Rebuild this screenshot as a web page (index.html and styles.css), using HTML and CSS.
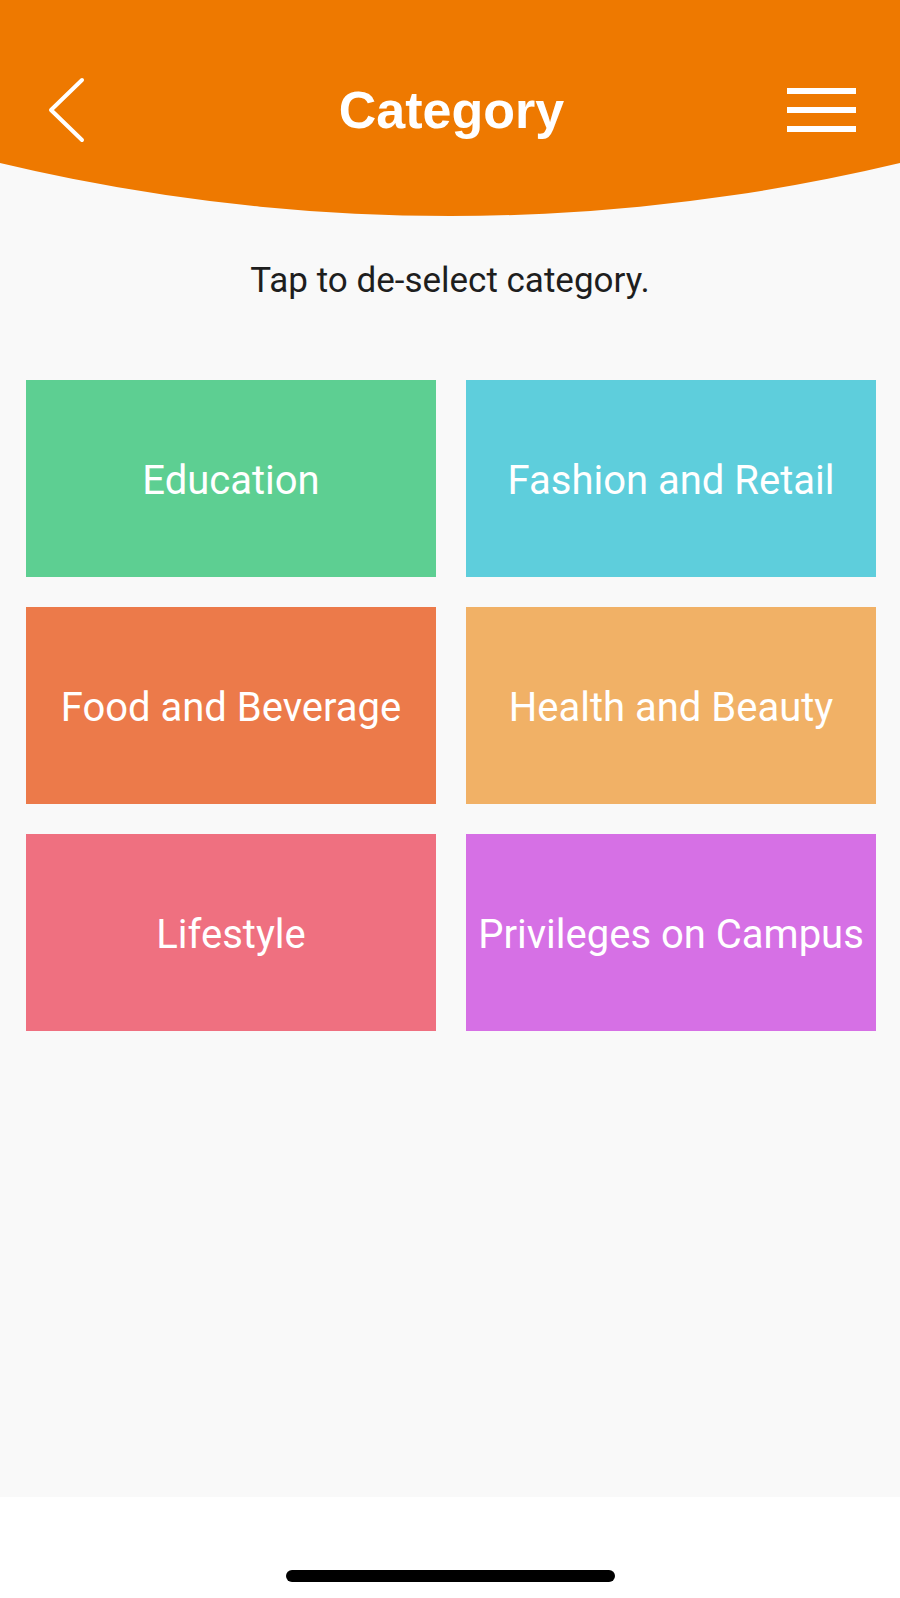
FILE: index.html
```html
<!DOCTYPE html>
<html lang="en">
<head>
<meta charset="utf-8">
<title>Category</title>
<link rel="stylesheet" href="styles.css">
</head>
<body>
<div class="screen">
  <header class="top-bar">
    <div class="nav">
      <svg class="back" viewBox="0 0 40 70" width="40" height="70" aria-hidden="true">
        <path d="M35 5 L4 35 L35 65" fill="none" stroke="#fff" stroke-width="4" stroke-linecap="round" stroke-linejoin="round"/>
      </svg>
      <h1 class="title">Category</h1>
      <div class="menu" aria-hidden="true">
        <span class="bar"></span>
        <span class="bar"></span>
        <span class="bar"></span>
      </div>
    </div>
  </header>

  <main class="content">
    <p class="hint">Tap to de-select category.</p>
    <div class="grid">
      <div class="tile green">Education</div>
      <div class="tile blue">Fashion and Retail</div>
      <div class="tile orange">Food and Beverage</div>
      <div class="tile peach">Health and Beauty</div>
      <div class="tile pink">Lifestyle</div>
      <div class="tile purple">Privileges on Campus</div>
    </div>
  </main>

  <footer class="home-area">
    <span class="home-indicator"></span>
  </footer>
</div>
</body>
</html>
```

FILE: styles.css
```css
* { box-sizing: border-box; }

html, body {
  margin: 0;
  padding: 0;
}

body {
  background: #ffffff;
  font-family: Roboto, "Liberation Sans", sans-serif;
}

.screen {
  width: 900px;
  height: 1598px;
  display: flex;
  flex-direction: column;
  background: #f9f9f9;
}

.top-bar {
  height: 216px;
  background: #ee7900;
  clip-path: circle(1937px at 50% -1721px);
  padding-top: 70px;
  flex: none;
}

.nav {
  height: 80px;
  display: grid;
  grid-template-columns: 1fr auto 1fr;
  align-items: center;
  padding: 0 44px 0 47px;
}

.back {
  display: block;
  justify-self: start;
}

.title {
  margin: 0;
  font-family: "Liberation Sans", Arial, sans-serif;
  font-weight: bold;
  font-size: 52px;
  line-height: 1;
  color: #ffffff;
  text-align: center;
}

.menu {
  justify-self: end;
  width: 69px;
  display: flex;
  flex-direction: column;
  gap: 13px;
}

.bar {
  display: block;
  height: 6px;
  background: #ffffff;
}

.content {
  flex: 1;
  padding-top: 45px;
}

.hint {
  margin: 0;
  font-size: 35px;
  line-height: 40px;
  color: #1e1e1e;
  text-align: center;
}

.grid {
  margin-top: 79px;
  padding: 0 24px 0 26px;
  display: grid;
  grid-template-columns: 1fr 1fr;
  grid-auto-rows: 197px;
  gap: 30px;
}

.tile {
  display: flex;
  align-items: center;
  justify-content: center;
  color: #ffffff;
  font-size: 40px;
  padding-top: 3px;
  white-space: nowrap;
}

.green { background: #5dcf92; }
.blue { background: #5ecedc; }
.orange { background: #ec7a4a; }
.peach { background: #f1b166; }
.pink { background: #ef7080; }
.purple { background: #d670e5; }

.home-area {
  height: 101px;
  flex: none;
  background: #ffffff;
  display: flex;
  justify-content: center;
  padding-top: 73px;
}

.home-indicator {
  display: block;
  width: 329px;
  height: 12px;
  border-radius: 6px;
  background: #000000;
}
```
